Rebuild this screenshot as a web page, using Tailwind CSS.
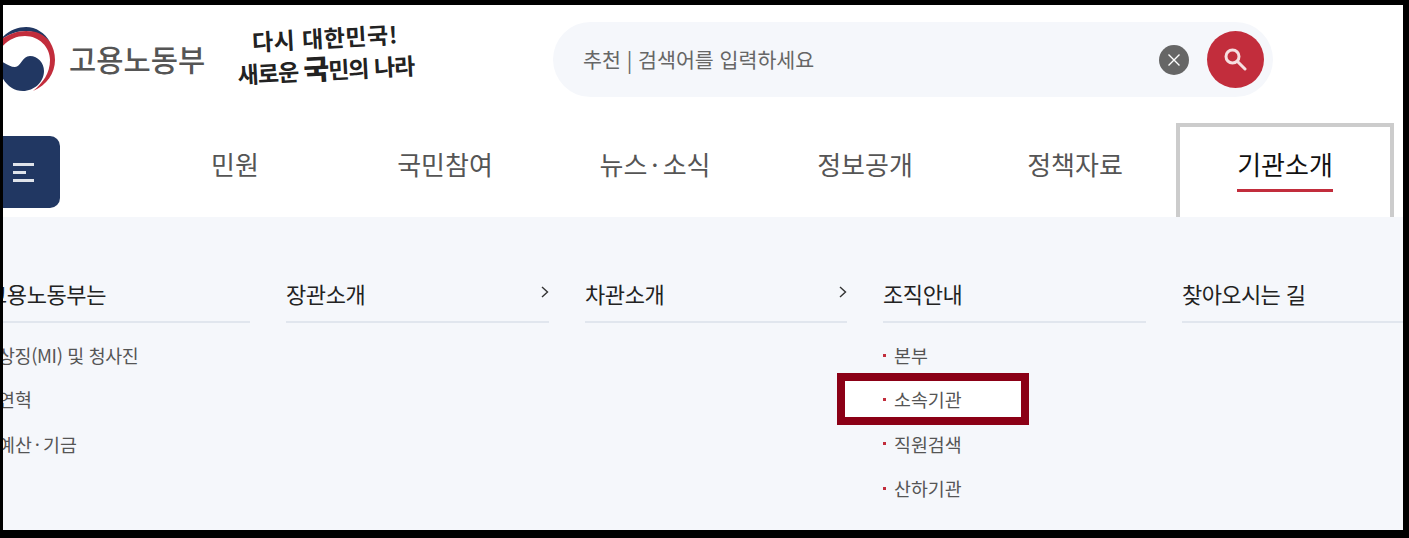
<!DOCTYPE html>
<html lang="ko">
<head>
    <meta charset="utf-8"/>
    <title>고용노동부 | 기관소개</title>
    <script src="https://cdn.jsdelivr.net/npm/@tailwindcss/browser@4"></script>
</head>
<body class="bg-black font-['Noto_Sans_CJK_KR','Noto_Sans',sans-serif]">
<div class="ml-[3px] mt-[5px] w-[1400px] h-[525px] bg-white overflow-hidden">
    <!-- header -->
    <header class="h-[118px] flex items-start">
        <svg class="ml-[-14px] mt-[22px] shrink-0" width="66" height="66" viewBox="0 0 66 66">
            <path d="M10 14C18 4 28 0 37 0C47 0 56 6 61 15C53 8 45 4 37 4C27 4 18 8 10 14Z" fill="#213762"/>
            <path d="M10 24C16 14 26 9 36 9C50 9 61 20 61 33C61 46 54 56 44 64C58 58 66 46 66 33C66 26 64 20 61 15C55 7 47 4 37 4C27 4 18 8 10 14Z" fill="#c22d3c"/>
            <path d="M10 33C16 36 21 40 26 40C32 40 33 29 41 29C49 29 55 36 55 44C55 55 45 64 34 64C22 64 12 54 10 40Z" fill="#213762"/>
        </svg>
        <span class="ml-[14px] mt-[31px] w-[137px] text-[29.6px] leading-[46px] font-medium text-[#555] shrink-0 whitespace-nowrap">고용노동부</span>
        <div class="ml-[31px] mt-[17px] w-[180px] h-[76px] shrink-0 font-bold text-[#222] text-[23px] leading-[30px] -rotate-3 whitespace-nowrap">
            <div class="pl-[16px] tracking-[0.5px]">다시 대한민국!</div>
            <div class="tracking-[-1px]">새로운 <span class="text-[28px] font-black">국</span>민의 나라</div>
        </div>
        <div class="ml-[136px] mt-[17px] w-[720px] h-[75px] shrink-0 rounded-full bg-[#f5f7fb] flex items-center pl-[30px] pr-[9px]">
            <span class="flex-1 text-[20.6px] text-[#666]">추천 | 검색어를 입력하세요</span>
            <span class="w-[30px] h-[30px] rounded-full bg-[#666] flex items-center justify-center">
                <svg width="14" height="14" viewBox="0 0 14 14"><path d="M1.5 1.5 12.5 12.5M12.5 1.5 1.5 12.5" stroke="#fff" stroke-width="1.4"/></svg>
            </span>
            <span class="ml-[18px] w-[57px] h-[57px] rounded-full bg-[#c22d3c] flex items-center justify-center">
                <svg class="ml-[-2px] mt-[-2px]" width="24" height="24" viewBox="0 0 24 24" fill="none" stroke="#f6dfe1"><circle cx="9.5" cy="9.5" r="6.5" stroke-width="3"/><path d="M14.5 14.5 22 22" stroke-width="3" stroke-linecap="round"/></svg>
            </span>
        </div>
    </header>
    <!-- nav -->
    <nav class="h-[94px] flex items-start">
        <button class="ml-[-20px] mt-[13px] w-[77px] h-[72px] rounded-[10px] bg-[#213762] flex flex-col justify-center gap-[5px] pl-[30px] shrink-0">
            <span class="block w-[21px] h-[3px] bg-[#dfe3ea]"></span>
            <span class="block w-[13px] h-[3px] bg-[#dfe3ea]"></span>
            <span class="block w-[21px] h-[3px] bg-[#dfe3ea]"></span>
        </button>
        <ul class="ml-[70px] flex text-[26px] text-[#555]">
            <li class="w-[210px] h-[94px] pt-[16px] text-center leading-[50px]">민원</li>
            <li class="w-[210px] h-[94px] pt-[16px] text-center leading-[50px]">국민참여</li>
            <li class="w-[210px] h-[94px] pt-[16px] text-center leading-[50px]">뉴스<span class="mx-[4px]">·</span>소식</li>
            <li class="w-[210px] h-[94px] pt-[16px] text-center leading-[50px]">정보공개</li>
            <li class="w-[210px] h-[94px] pt-[16px] text-center leading-[50px]">정책자료</li>
            <li class="w-[218px] h-[94px] pt-[12px] ml-[-4px] text-center leading-[50px] border-[4px] border-b-0 border-[#ccc] text-[#111]">
                <span class="inline-block h-[53px] border-b-[3px] border-[#c22d3c]">기관소개</span>
            </li>
        </ul>
    </nav>
    <!-- submenu panel -->
    <section class="h-[313px] bg-[#f5f7fb] pt-[51px] ml-[-16px] flex gap-[36px] w-[1500px]">
        <div class="w-[263px] shrink-0">
            <h3 class="h-[55px] border-b-2 border-[#e1e6ee] text-[22px] leading-[50px] text-[#222] tracking-[-0.4px] whitespace-nowrap">고용노동부는</h3>
            <ul class="pt-[10px] text-[18.4px] leading-[44.3px] text-[#555] whitespace-nowrap">
                <li class="flex items-center gap-[8px]"><i class="w-[3px] h-[3px] bg-[#c22d3c]"></i><span class="tracking-[-0.35px]">상징(MI) 및 청사진</span></li>
                <li class="flex items-center gap-[8px]"><i class="w-[3px] h-[3px] bg-[#c22d3c]"></i>연혁</li>
                <li class="flex items-center gap-[8px]"><i class="w-[3px] h-[3px] bg-[#c22d3c]"></i><span>예산<span class="mx-[3px]">·</span>기금</span></li>
            </ul>
        </div>
        <div class="w-[263px] shrink-0">
            <h3 class="h-[55px] border-b-2 border-[#e1e6ee] text-[22px] leading-[50px] text-[#222] tracking-[-0.4px] flex justify-between">장관소개
                <svg class="mt-[18px]" width="8" height="12" viewBox="0 0 8 12" fill="none"><path d="M1 1l5.5 5L1 11" stroke="#333" stroke-width="1.4"/></svg>
            </h3>
        </div>
        <div class="w-[262px] shrink-0">
            <h3 class="h-[55px] border-b-2 border-[#e1e6ee] text-[22px] leading-[50px] text-[#222] tracking-[-0.4px] flex justify-between">차관소개
                <svg class="mt-[18px]" width="8" height="12" viewBox="0 0 8 12" fill="none"><path d="M1 1l5.5 5L1 11" stroke="#333" stroke-width="1.4"/></svg>
            </h3>
        </div>
        <div class="w-[263px] shrink-0">
            <h3 class="h-[55px] border-b-2 border-[#e1e6ee] text-[22px] leading-[50px] text-[#222] tracking-[-0.4px]">조직안내</h3>
            <ul class="pt-[10px] text-[18.4px] leading-[44.3px] text-[#555]">
                <li class="flex items-center gap-[8px]"><i class="w-[3px] h-[3px] bg-[#c22d3c]"></i>본부</li>
                <li class="relative flex items-center gap-[8px]">
                    <!-- highlight frame -->
                    <span class="absolute left-[-46px] top-[-4px] w-[192px] h-[52px] border-[8px] border-[#8b0016] bg-white"></span>
                    <i class="relative w-[3px] h-[3px] bg-[#c22d3c]"></i><span class="relative">소속기관</span>
                </li>
                <li class="flex items-center gap-[8px]"><i class="w-[3px] h-[3px] bg-[#c22d3c]"></i>직원검색</li>
                <li class="flex items-center gap-[8px]"><i class="w-[3px] h-[3px] bg-[#c22d3c]"></i>산하기관</li>
            </ul>
        </div>
        <div class="w-[263px] shrink-0">
            <h3 class="h-[55px] border-b-2 border-[#e1e6ee] text-[22px] leading-[50px] text-[#222] tracking-[-0.6px]">찾아오시는 길</h3>
        </div>
    </section>
</div>
</body>
</html>
